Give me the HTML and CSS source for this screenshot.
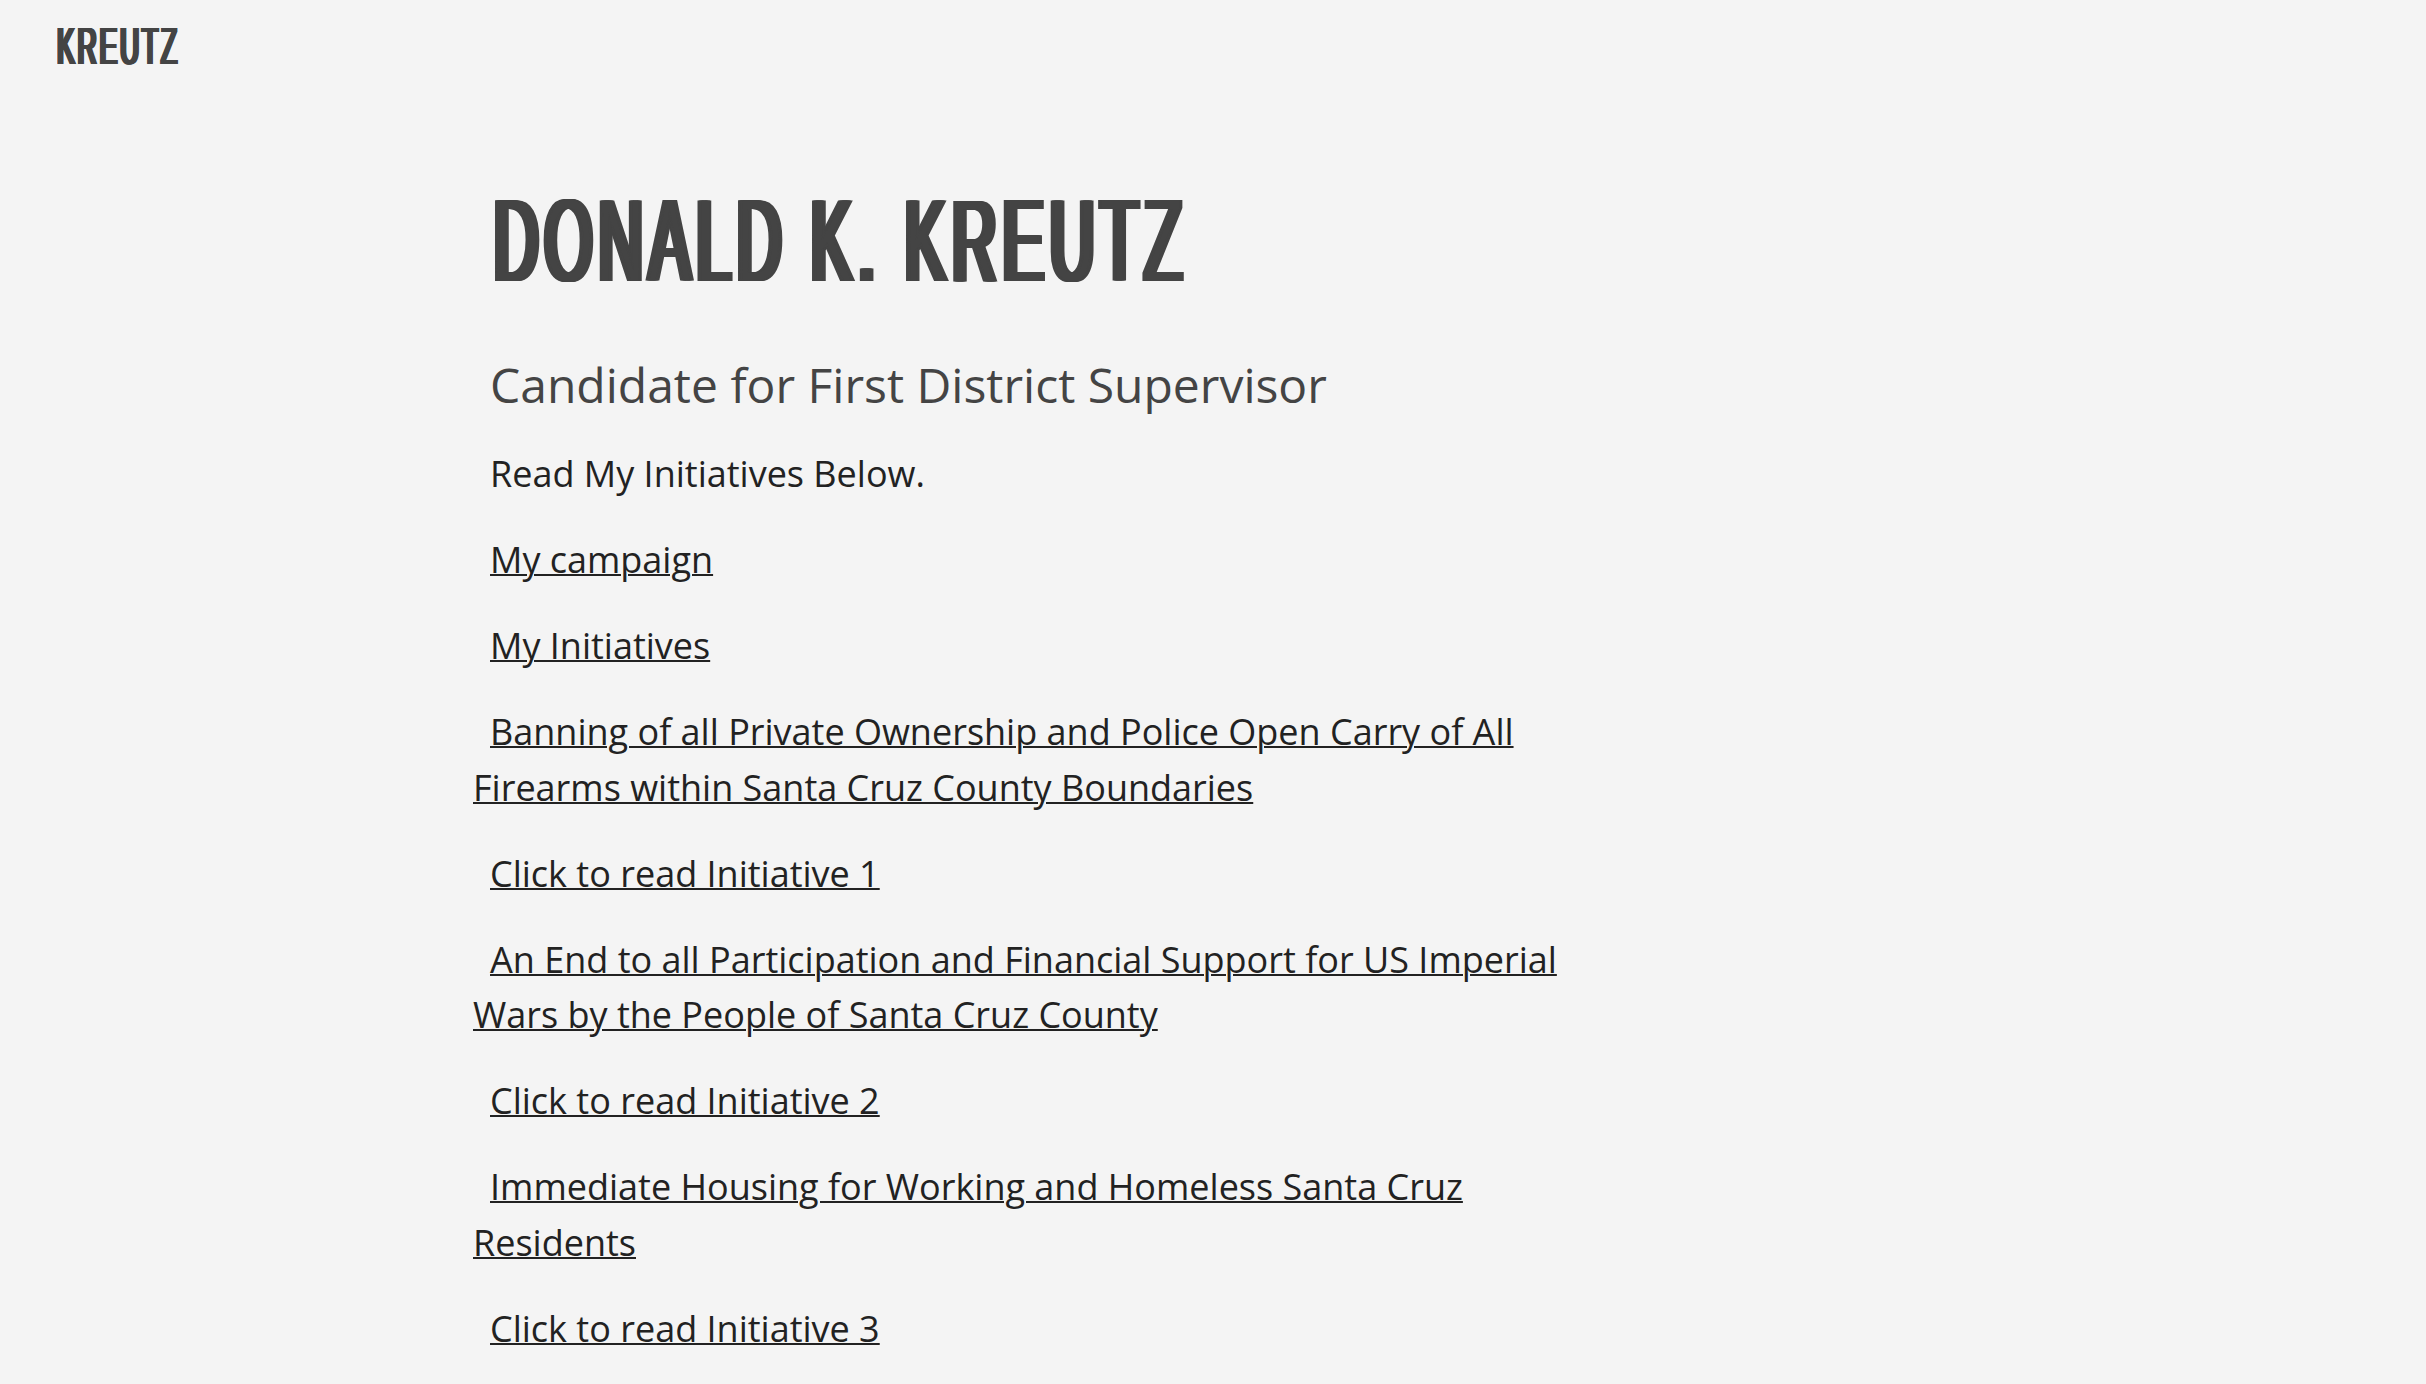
FILE: index.html
```html
<!DOCTYPE html>
<html lang="en">
<head>
<meta charset="utf-8">
<title>Donald K. Kreutz</title>
<link rel="stylesheet" href="styles.css">
</head>
<body>
<header class="site-header">
  <a class="logo" href="#"><span class="condensed">KREUTZ</span></a>
</header>
<main class="content">
  <h1 class="title"><span class="condensed">DONALD K. KREUTZ</span></h1>
  <h2 class="subtitle">Candidate for First District Supervisor</h2>
  <p>Read My Initiatives Below.</p>
  <p><a href="#">My campaign</a></p>
  <p><a href="#">My Initiatives</a></p>
  <p><a href="#">Banning of all Private Ownership and Police Open Carry of All Firearms within Santa Cruz County Boundaries</a></p>
  <p><a href="#">Click to read Initiative 1</a></p>
  <p><a href="#">An End to all Participation and Financial Support for US Imperial Wars by the People of Santa Cruz County</a></p>
  <p><a href="#">Click to read Initiative 2</a></p>
  <p><a href="#">Immediate Housing for Working and Homeless Santa Cruz Residents</a></p>
  <p><a href="#">Click to read Initiative 3</a></p>
</main>
</body>
</html>
```
FILE: styles.css
```css
html, body {
  margin: 0;
  padding: 0;
  background: #f4f4f4;
}

body {
  font-family: "Open Sans", "Liberation Sans", sans-serif;
  color: #222222;
  font-size: 36px;
  line-height: 55.5px;
}

/* condensed display face (Oswald-like), built from Liberation Sans */
.condensed {
  display: inline-block;
  white-space: nowrap;
  transform-origin: left center;
}

.site-header {
  padding: 21px 0 0 57px;
  height: 51px;
}

.logo {
  display: block;
  font-family: "Liberation Sans", Arial, sans-serif;
  font-weight: 400;
  font-size: 51px;
  line-height: 51px;
  color: #444444;
  text-decoration: none;
}

.logo .condensed {
  letter-spacing: 5.3px;
  transform: scaleX(0.521);
  text-shadow:
    1.1px 0 0 #444444, -1.1px 0 0 #444444,
    2.2px 0 0 #444444, -2.2px 0 0 #444444,
    3.3px 0 0 #444444, -3.3px 0 0 #444444;
}

.content {
  margin: 100px 0 0 473px;
  width: 1114px;
}

.title {
  margin: 0 0 40px;
  padding-left: 21px;
  font-family: "Liberation Sans", Arial, sans-serif;
  font-weight: 400;
  font-size: 116px;
  line-height: 1.2;
  color: #444444;
}

.title .condensed {
  letter-spacing: 12px;
  transform: scaleX(0.5285);
  text-shadow:
    2.5px 0 0 #444444, -2.5px 0 0 #444444,
    5px 0 0 #444444, -5px 0 0 #444444,
    7.5px 0 0 #444444, -7.5px 0 0 #444444;
}

.subtitle {
  margin: 0 0 28px;
  text-indent: 17px;
  font-size: 48px;
  line-height: 1.4;
  font-weight: 400;
  color: #444444;
}

.content p {
  margin: 0 0 30.5px;
  text-indent: 17px;
}

.content a {
  color: #222222;
  text-decoration: underline;
  text-decoration-thickness: 2px;
  text-underline-offset: 1px;
}
```
